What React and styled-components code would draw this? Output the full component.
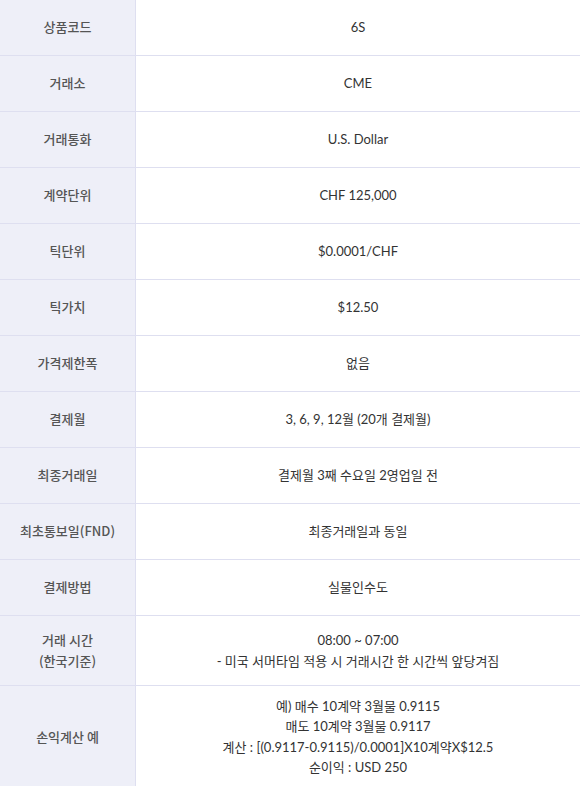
import React from "react";
import styled, { createGlobalStyle } from "styled-components";

const Global = createGlobalStyle`
  html, body { margin: 0; padding: 0; background: #fff; }
  body { font-family: Lato, "Noto Sans CJK KR", sans-serif; }
`;

const Table = styled.table`
  width: 580px;
  margin-top: -1px;
  border-collapse: collapse;
  border-top: 1px solid #dedff0;
  table-layout: fixed;
  font-size: 13px;
`;

const Row = styled.tr`
  border-bottom: 1px solid #dedff0;
  height: 56px;
`;

const Label = styled.th`
  width: 119px;
  background: #eeeff8;
  border-right: 1px solid #dedff0;
  color: #555;
  font-family: "Noto Sans CJK KR", sans-serif;
  font-weight: 500;
  font-size: 13px;
  line-height: 20.5px;
  padding: ${(p) => (p.$tight ? "10px 8px" : "14px 8px")};
  text-align: center;
  vertical-align: middle;
`;

const Value = styled.td`
  color: #333;
  font-family: Lato, "Noto Sans CJK KR", sans-serif;
  font-size: 13px;
  line-height: ${(p) => (p.$tight ? "20.4px" : "20.5px")};
  padding: ${(p) => (p.$tight ? "10px 12px" : "14px 12px")};
  text-align: center;
  vertical-align: middle;
`;

const rows = [
  ["상품코드", ["6S"]],
  ["거래소", ["CME"]],
  ["거래통화", ["U.S. Dollar"]],
  ["계약단위", ["CHF 125,000"]],
  ["틱단위", ["$0.0001/CHF"]],
  ["틱가치", ["$12.50"]],
  ["가격제한폭", ["없음"]],
  ["결제월", ["3, 6, 9, 12월 (20개 결제월)"]],
  ["최종거래일", ["결제월 3째 수요일 2영업일 전"]],
  ["최초통보일(FND)", ["최종거래일과 동일"]],
  ["결제방법", ["실물인수도"]],
  [["거래 시간", "(한국기준)"], ["08:00 ~ 07:00", "- 미국 서머타임 적용 시 거래시간 한 시간씩 앞당겨짐"]],
  [
    ["손익계산 예"],
    [
      "예) 매수 10계약 3월물 0.9115",
      "매도 10계약 3월물 0.9117",
      "계산 : [(0.9117-0.9115)/0.0001]X10계약X$12.5",
      "순이익 : USD 250",
    ],
    true,
  ],
];

const lines = (arr) =>
  [].concat(arr).map((t, i) => (
    <React.Fragment key={i}>
      {i > 0 && <br />}
      {t}
    </React.Fragment>
  ));

export default function App() {
  return (
    <>
      <Global />
      <Table>
        <tbody>
          {rows.map(([label, value, tight], i) => (
            <Row key={i}>
              <Label $tight={tight}>{lines(label)}</Label>
              <Value $tight={tight}>{lines(value)}</Value>
            </Row>
          ))}
        </tbody>
      </Table>
    </>
  );
}
